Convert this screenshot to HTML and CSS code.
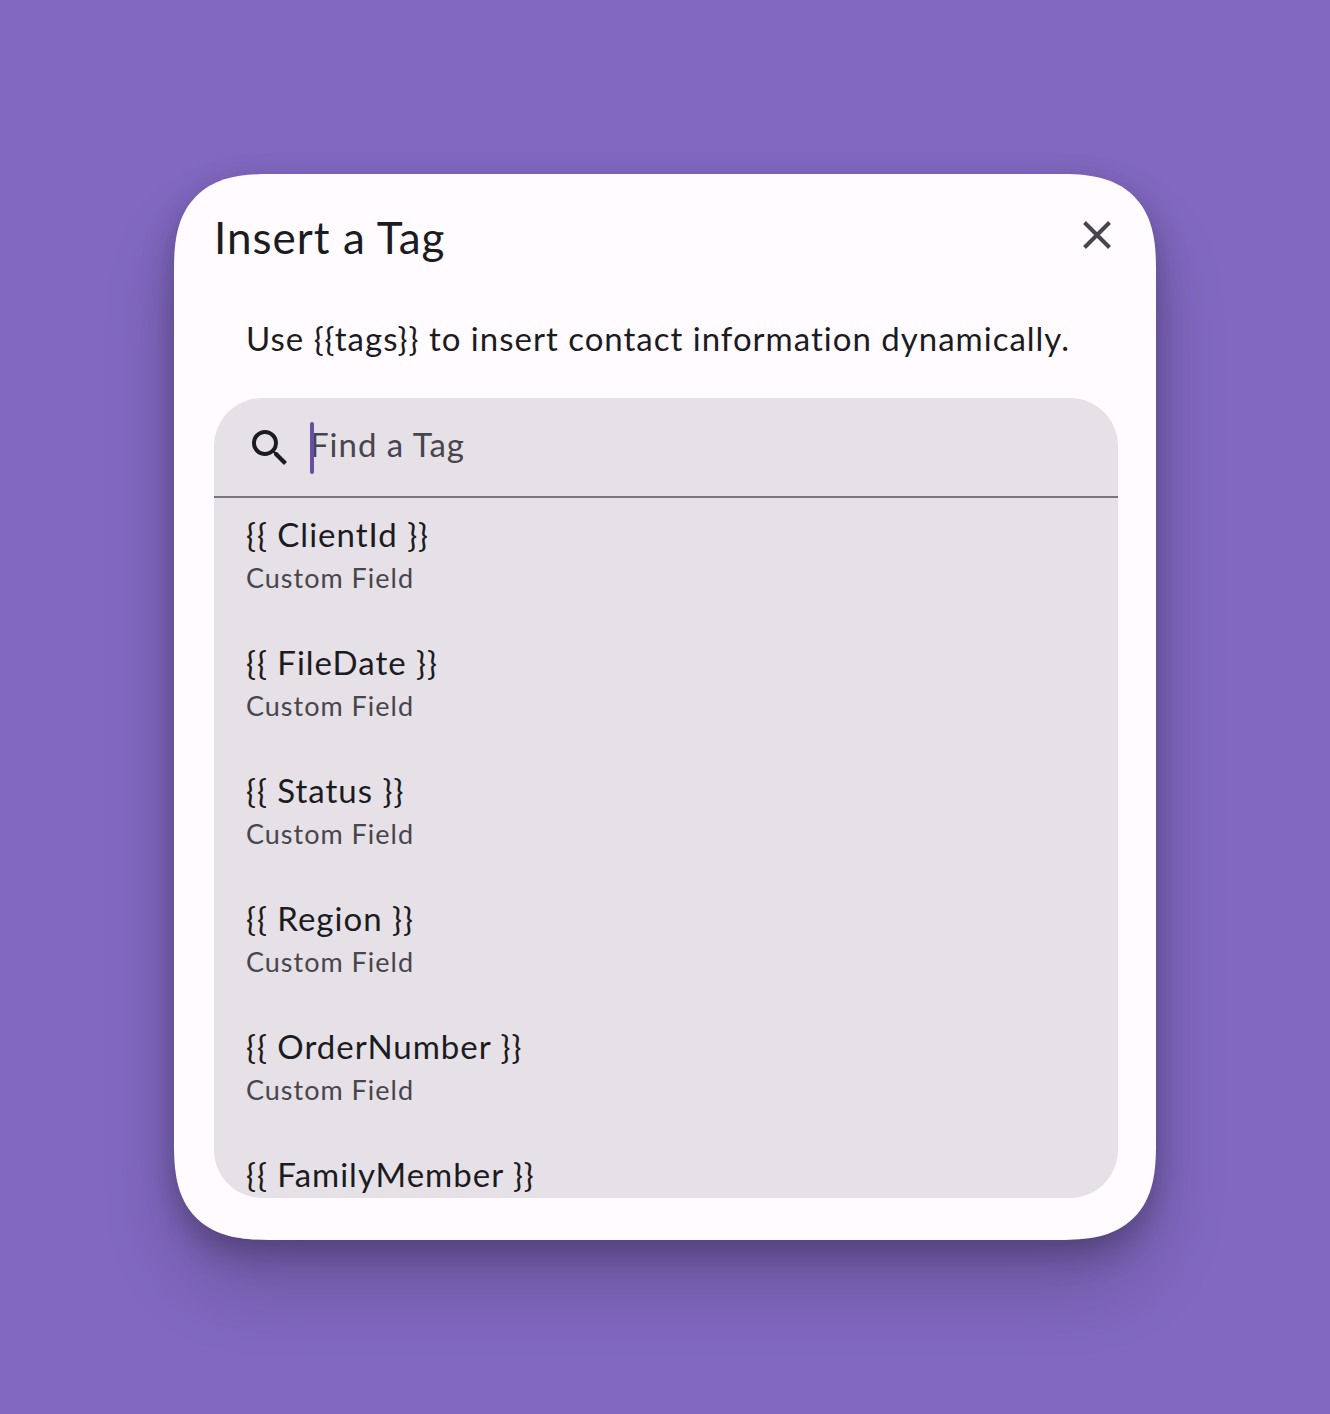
FILE: index.html
```
<!DOCTYPE html>
<html lang="en">
<head>
    <meta charset="UTF-8">
    <meta name="viewport" content="width=device-width, initial-scale=1.0">
    <title>Insert a Tag</title>
    <link rel="stylesheet" href="styles.css">
</head>
<body>

    <main class="dialog" role="dialog" aria-labelledby="dialogTitle">
        <!-- Header -->
        <div class="dialog-header">
            <h1 id="dialogTitle">Insert a Tag</h1>
            <button type="button" class="close-btn" aria-label="Close">
                <svg viewBox="0 0 42 42" width="42" height="42" fill="none" stroke="currentColor" stroke-width="4">
                    <path d="M8.5 8.5l25 25M33.5 8.5l-25 25"/>
                </svg>
            </button>
        </div>

        <p class="description">Use {{tags}} to insert contact information dynamically.</p>

        <div class="panel">
            <!-- Search -->
            <div class="search">
                <label for="tagSearch" aria-label="Find a Tag">
                    <svg viewBox="0 0 24 24" width="48" height="48" fill="currentColor">
                        <path d="M15.5 14h-.79l-.28-.27A6.47 6.47 0 0 0 16 9.5 6.5 6.5 0 1 0 9.5 16c1.61 0 3.09-.59 4.23-1.57l.27.28v.79l5 4.99L20.49 19l-4.99-5zm-6 0C7.01 14 5 11.99 5 9.5S7.01 5 9.5 5 14 7.01 14 9.5 11.99 14 9.5 14z"/>
                    </svg>
                </label>
                <div class="search-field">
                    <input type="text" id="tagSearch" placeholder="Find a Tag">
                    <span class="caret"></span>
                </div>
            </div>

            <!-- Tags -->
            <ul class="tag-list">
                <li>
                    <span class="tag-name">{{ ClientId }}</span>
                    <span class="tag-type">Custom Field</span>
                </li>
                <li>
                    <span class="tag-name">{{ FileDate }}</span>
                    <span class="tag-type">Custom Field</span>
                </li>
                <li>
                    <span class="tag-name">{{ Status }}</span>
                    <span class="tag-type">Custom Field</span>
                </li>
                <li>
                    <span class="tag-name">{{ Region }}</span>
                    <span class="tag-type">Custom Field</span>
                </li>
                <li>
                    <span class="tag-name">{{ OrderNumber }}</span>
                    <span class="tag-type">Custom Field</span>
                </li>
                <li>
                    <span class="tag-name">{{ FamilyMember }}</span>
                </li>
            </ul>
        </div>
    </main>

</body>
</html>
```
FILE: styles.css
```
/* styles.css */

* {
    box-sizing: border-box;
}

body {
    font-family: Lato, "Open Sans", sans-serif;
    background-color: #8268c1;
    color: #1c1b1f;
    letter-spacing: 1px;
    margin: 0;
    min-height: 100vh;
    display: flex;
    align-items: center;
    justify-content: center;
}

/* Dialog */
.dialog {
    width: 74%;
    max-width: 982px;
    padding: 40px 38px 42px 40px;
    background-color: #fffbff;
    border-radius: 74px;
    box-shadow: 0 12px 32px rgba(0, 0, 0, 0.26), 0 48px 72px rgba(0, 0, 0, 0.18);
}

/* Smoother corners where the browser has them */
@supports (corner-shape: superellipse(1.4)) {
    .dialog {
        border-radius: 96px;
        corner-shape: superellipse(1.4);
    }
}

.dialog-header {
    display: flex;
    align-items: flex-start;
    justify-content: space-between;
}

h1 {
    margin: 0;
    font-size: 44px;
    font-weight: 400;
    line-height: 46px;
}

.close-btn {
    display: flex;
    padding: 0;
    border: none;
    background: none;
    color: #48454e;
    cursor: pointer;
}

.description {
    margin: 54px 0 36px;
    padding-left: 32px;
    font-size: 33px;
    line-height: 48px;
}

/* Panel with the search box and the tags */
.panel {
    height: 800px;
    display: flex;
    flex-direction: column;
    overflow: hidden;
    background-color: #e5e1e6;
    border-radius: 48px;
}

.search {
    display: flex;
    align-items: center;
    flex-shrink: 0;
    gap: 16px;
    height: 100px;
    padding: 2px 32px 0;
    border-bottom: 2px solid #79757f;
}

.search label {
    display: flex;
}

.search-field {
    position: relative;
    flex: 1;
    display: flex;
}

.search input {
    width: 100%;
    height: 52px;
    padding: 0 0 8px;
    border: none;
    outline: none;
    background: none;
    color: inherit;
    font: inherit;
    font-size: 33px;
    letter-spacing: inherit;
    caret-color: transparent;
}

.search input::placeholder {
    color: #48454e;
    opacity: 1;
}

.caret {
    position: absolute;
    top: 0;
    left: 0;
    width: 4px;
    height: 52px;
    border-radius: 2px;
    background-color: #6750a4;
}

.tag-list {
    flex: 1;
    min-height: 0;
    margin: 0;
    padding: 0;
    list-style: none;
    overflow: hidden;
}

.tag-list li {
    height: 128px;
    padding: 12px 32px;
}

.tag-name,
.tag-type {
    display: block;
}

.tag-name {
    font-size: 33px;
    line-height: 48px;
}

.tag-type {
    font-size: 27px;
    line-height: 40px;
    color: #48454e;
}
```
